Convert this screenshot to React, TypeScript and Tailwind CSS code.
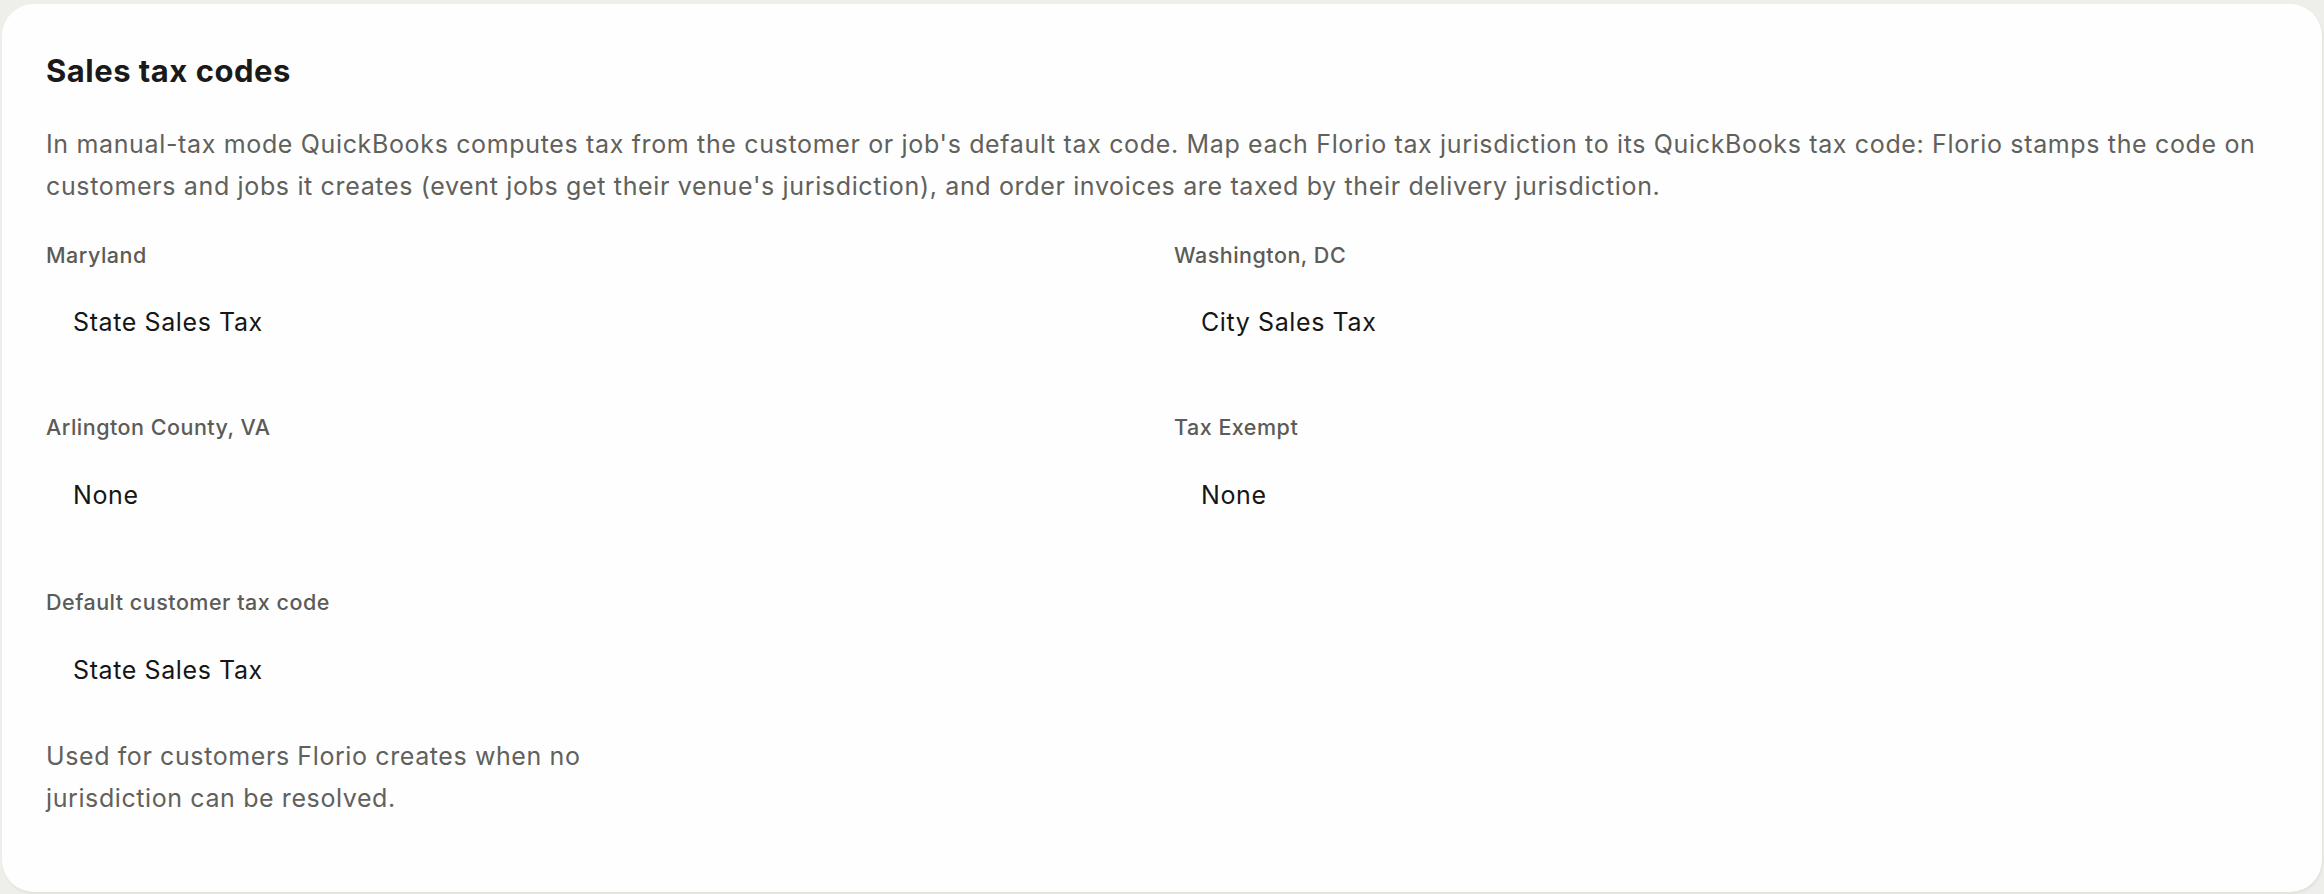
import React from "react";

const FONT = { fontFamily: "Inter, 'Noto Sans', sans-serif" };

type Field = { label: string; value: string };

const JURISDICTIONS: Field[] = [
  { label: "Maryland", value: "State Sales Tax" },
  { label: "Washington, DC", value: "City Sales Tax" },
  { label: "Arlington County, VA", value: "None" },
  { label: "Tax Exempt", value: "None" },
];

function CodeField({ label, value }: Field) {
  return (
    <div className="flex flex-col">
      <label className="text-[21.5px] leading-[30px] font-medium tracking-[0.5px] text-[#5b5b57]">{label}</label>
      <div className="mt-[23.5px] flex h-[60px] items-center pl-[27px] text-[25px] tracking-[0.6px] text-[#161616]">
        {value}
      </div>
    </div>
  );
}

export default function App() {
  return (
    <div className="min-h-screen bg-[#eeeeea] px-[2px] pt-[4px] pb-[4px]" style={FONT}>
      <section className="rounded-[32px] bg-[#fefefe] px-[44px] pt-[47px] pb-[73px] shadow-[1px_2px_3px_rgba(0,0,0,0.06)]">
        {/* ── Header ───────────────────────────── */}
        <h2 className="text-[31px] leading-[40px] font-bold text-[#1a1a1a] tracking-[0.5px]">Sales tax codes</h2>
        <p className="mt-[33px] text-[25px] leading-[41.5px] tracking-[0.65px] text-[#61615c]">
          In manual-tax mode QuickBooks computes tax from the customer or job's default tax code. Map each Florio tax
          jurisdiction to its QuickBooks tax code: Florio stamps the code on customers and jobs it creates (event jobs
          get their venue's jurisdiction), and order invoices are taxed by their delivery jurisdiction.
        </p>

        {/* ── Jurisdiction grid ────────────────── */}
        <div className="mt-[32.5px] grid grid-cols-2 gap-x-[24px] gap-y-[59px]">
          {JURISDICTIONS.map((f) => (
            <CodeField key={f.label} {...f} />
          ))}
        </div>

        {/* ── Default code ─────────────────────── */}
        <div className="mt-[61.5px] w-[580px]">
          <CodeField label="Default customer tax code" value="State Sales Tax" />
          <p className="mt-[34px] text-[25px] leading-[42px] tracking-[0.6px] text-[#61615c]">
            Used for customers Florio creates when no jurisdiction can be resolved.
          </p>
        </div>
      </section>
    </div>
  );
}
